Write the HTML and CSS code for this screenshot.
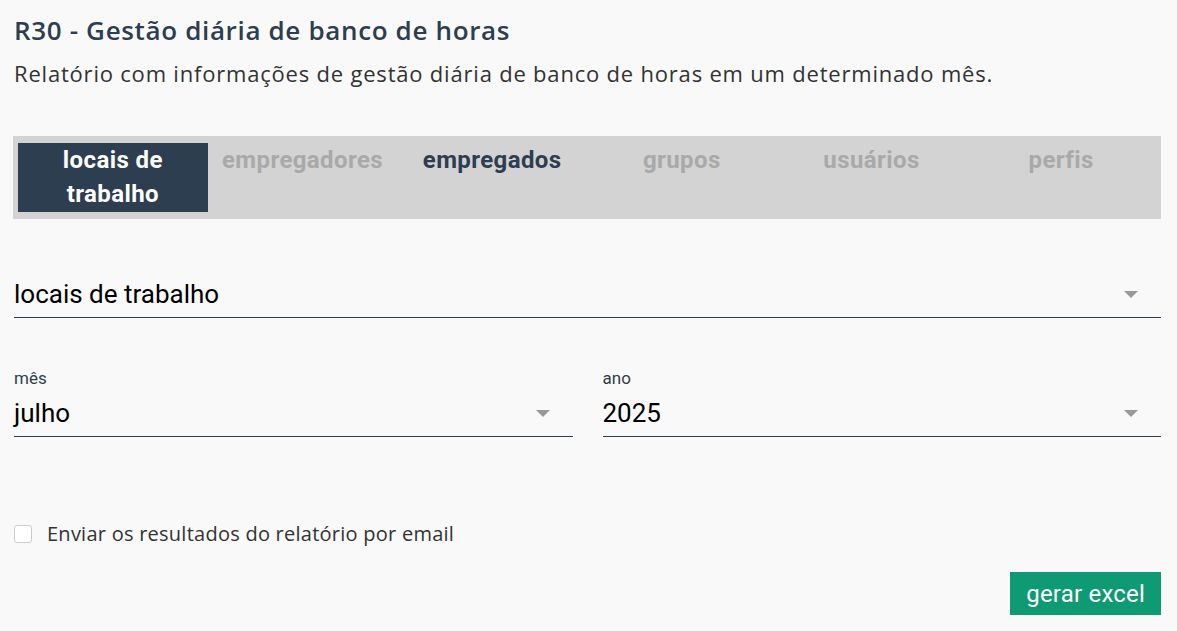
FILE: index.html
```html
<!DOCTYPE html>
<html lang="pt-BR">
<head>
  <meta charset="UTF-8" />
  <title>R30 - Gestão diária de banco de horas</title>
  <meta name="viewport" content="width=device-width, initial-scale=1.0" />
  <link rel="stylesheet" href="styles.css">
</head>
<body>

  <div class="report">
    <h1>R30 - Gestão diária de banco de horas</h1>
    <p class="intro">Relatório com informações de gestão diária de banco de horas em um determinado mês.</p>

    <div class="tabs">
      <div class="tab active"><span>locais de trabalho</span></div>
      <div class="tab">empregadores</div>
      <div class="tab enabled">empregados</div>
      <div class="tab">grupos</div>
      <div class="tab">usuários</div>
      <div class="tab">perfis</div>
    </div>

    <div class="field field-wide">
      <div class="select">
        <span>locais de trabalho</span>
        <i class="arrow"></i>
      </div>
    </div>

    <div class="row">
      <div class="field">
        <label>mês</label>
        <div class="select">
          <span>julho</span>
          <i class="arrow"></i>
        </div>
      </div>
      <div class="field">
        <label>ano</label>
        <div class="select">
          <span>2025</span>
          <i class="arrow"></i>
        </div>
      </div>
    </div>

    <label class="check">
      <span class="box"></span>
      Enviar os resultados do relatório por email
    </label>

    <div class="actions">
      <button>gerar excel</button>
    </div>
  </div>

</body>
</html>
```

FILE: styles.css
```css
body {
  margin: 0;
  background: #f9f9f9;
  font-family: 'Open Sans', sans-serif;
  color: #333;
}

.report {
  padding: 12px 16px 0 14px;
}

h1 {
  margin: 0;
  font-size: 26px;
  font-weight: 600;
  letter-spacing: 0.65px;
  color: #2c3e50;
  line-height: 36px;
}

.intro {
  margin: 10px 0 0;
  font-size: 22px;
  letter-spacing: 0.8px;
  line-height: 30px;
  color: #333;
}

.tabs {
  display: grid;
  grid-template-columns: repeat(6, minmax(0, 1fr));
  background: #d3d3d3;
  margin: 48px 0 0 -1px;
  padding: 7px 5px;
}

.tab {
  font-family: Roboto, sans-serif;
  font-weight: bold;
  font-size: 24px;
  letter-spacing: 0.4px;
  line-height: 34px;
  text-align: center;
  color: #a9a9a9;
  padding: 0 8px;
  min-height: 69px;
}

.tab.active {
  background: #2c3e50;
  color: #fff;
}

.tab.active span {
  display: block;
  max-width: 130px;
  margin: 0 auto;
}

.tab.enabled {
  color: #2c3e50;
}

.field {
  font-family: Roboto, sans-serif;
}

.field-wide {
  margin-top: 52px;
}

.field label {
  display: block;
  font-size: 17px;
  color: #2c3e50;
  line-height: 20px;
  margin-bottom: 2px;
}

.select {
  display: flex;
  align-items: center;
  justify-content: space-between;
  border-bottom: 1px solid #2c3e50;
  height: 46px;
  font-size: 26px;
  color: #000;
}

.arrow {
  width: 0;
  height: 0;
  border-left: 7px solid transparent;
  border-right: 7px solid transparent;
  border-top: 7px solid #999;
  margin-right: 23px;
}

.row {
  display: grid;
  grid-template-columns: 1fr 1fr;
  gap: 30px;
  margin-top: 50px;
}

.check {
  display: flex;
  align-items: center;
  gap: 15px;
  margin-top: 83px;
  font-size: 20px;
  letter-spacing: 0.25px;
  line-height: 28px;
  color: #333;
}

.box {
  width: 16px;
  height: 16px;
  border: 1px solid #ccc;
  border-radius: 3px;
  background: #fff;
}

.actions {
  display: flex;
  justify-content: flex-end;
  margin-top: 24px;
}

button {
  font-family: Roboto, sans-serif;
  font-size: 24px;
  letter-spacing: 0.2px;
  color: #fff;
  background: #0e9a72;
  border: none;
  padding: 0 16px;
  height: 43px;
}
```
